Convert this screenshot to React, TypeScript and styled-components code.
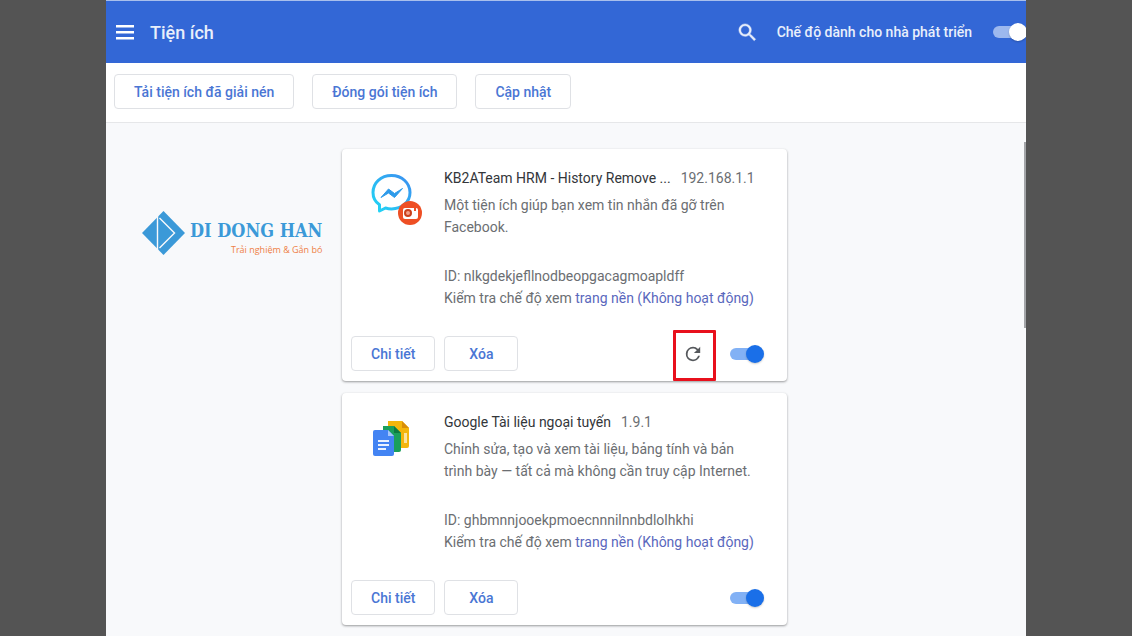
import React, { useState } from "react";
import styled, { createGlobalStyle } from "styled-components";

const GlobalStyle = createGlobalStyle`
  *, *::before, *::after { box-sizing: border-box; }
  body {
    margin: 0;
    background: #545454;
    font-family: Roboto, "Liberation Sans", sans-serif;
    font-size: 14px;
    color: #6b6e72;
  }
`;

const Page = styled.div`
  position: relative;
  min-height: 100vh;
  margin: 0 106px;
  display: flex;
  flex-direction: column;
  background: #f8f9fb;
  overflow: hidden;
`;

const TopBar = styled.header`
  height: 63px;
  display: flex;
  align-items: center;
  padding-left: 10px;
  border-top: 1px solid #a9bfec;
  background: #3367d6;
  color: #e9effb;
`;

const IconButton = styled.button<{ $color: string }>`
  display: flex;
  padding: 0;
  border: 0;
  background: none;
  color: ${(p) => p.$color};
  cursor: pointer;
`;

const PageTitle = styled.h1`
  flex: 1;
  margin: 0 0 0 16px;
  font-size: 18px;
  font-weight: 500;
`;

const DevMode = styled.label`
  display: flex;
  align-items: center;
  gap: 21px;
  margin-left: 18px;
  margin-right: -1px;
  font-size: 14px;
  font-weight: 500;
`;

const Switch = styled.input<{ $knob: string; $track: string }>`
  appearance: none;
  position: relative;
  width: 34px;
  height: 18px;
  margin: 0;
  cursor: pointer;

  &::before {
    content: "";
    position: absolute;
    inset: 3px 1px 3px 0;
    border-radius: 7px;
    background: ${(p) => p.$track};
  }
  &::after {
    content: "";
    position: absolute;
    top: 0;
    left: 0;
    width: 18px;
    height: 18px;
    border-radius: 50%;
    background: ${(p) => p.$knob};
    box-shadow: 0 1px 2px rgba(0, 0, 0, 0.2);
  }
  &:checked::after {
    left: auto;
    right: 0;
  }
`;

const Toolbar = styled.div`
  display: flex;
  gap: 18px;
  padding: 11px 8px 13px;
  border-bottom: 1px solid #e6e7e9;
  background: #fff;
`;

const OutlineButton = styled.button`
  height: 35px;
  min-width: 74px;
  padding: 0 19px;
  border: 1px solid #dfe1e5;
  border-radius: 4px;
  background: #fff;
  color: #4a76d4;
  font: 500 14px Roboto, "Liberation Sans", sans-serif;
  cursor: pointer;
`;

const Content = styled.main`
  flex: 1;
  display: grid;
  grid-template-columns: 1fr 445px 1fr;
  padding: 26px 3px 10px 0;
`;

const Brand = styled.div`
  display: flex;
  align-items: flex-start;
  gap: 5px;
  padding: 62px 0 0 36px;
`;

const BrandText = styled.div`
  display: flex;
  flex-direction: column;
  align-items: flex-end;
  padding-top: 8px;
  white-space: nowrap;
`;

const BrandName = styled.div`
  font: 700 18px/24px "DejaVu Serif Condensed", "Liberation Serif", serif;
  color: #3b99d8;
`;

const BrandTagline = styled.div`
  font: 400 9px/14px "Open Sans", sans-serif;
  color: #ef7f45;
`;

const CardList = styled.div`
  display: flex;
  flex-direction: column;
  gap: 12px;
`;

const Card = styled.article`
  height: 232px;
  display: flex;
  flex-direction: column;
  border-radius: 4px;
  background: #fff;
  box-shadow: 0 1px 2px rgba(60, 64, 67, 0.35), 0 1px 3px rgba(60, 64, 67, 0.2);
`;

const CardBody = styled.div`
  flex: 1;
  display: grid;
  grid-template-columns: 54px 1fr;
  column-gap: 20px;
  padding: 18px 24px 0 28px;
  line-height: 22px;
`;

const IconSlot = styled.div`
  padding-top: 5px;
`;

const Heading = styled.div`
  display: flex;
  gap: 10px;
  margin-bottom: 5px;
`;

const Name = styled.h2`
  margin: 0;
  font-size: 14px;
  font-weight: 400;
  color: #33363a;
  white-space: nowrap;
`;

const Description = styled.p`
  min-height: 44px;
  margin: 0 0 27px;
`;

const Detail = styled.div`
  white-space: nowrap;
`;

const ViewLink = styled.a`
  color: #5a68bd;
  text-decoration: none;
`;

const CardFooter = styled.div`
  display: flex;
  align-items: center;
  gap: 9px;
  padding: 0 23px 10px 9px;
`;

const Controls = styled.div`
  display: flex;
  align-items: center;
  gap: 28px;
  margin-left: auto;
`;

const Highlighted = styled.div`
  position: relative;

  &::after {
    content: "";
    position: absolute;
    inset: -15px -14px -18px -11px;
    border: 3px solid #e8101c;
    border-radius: 1px;
    pointer-events: none;
  }
`;

const ScrollThumb = styled.div`
  position: absolute;
  top: 142px;
  right: 0;
  width: 2px;
  height: 186px;
  background: #a3a5a8;
`;

const MenuIcon = () => (
  <svg width="18" height="16" viewBox="0 0 18 16" fill="currentColor" aria-hidden="true">
    <path d="M0 1h18v2.500H0zM0 7h18v2.500H0zM0 13h18v2.500H0z" />
  </svg>
);

const SearchIcon = () => (
  <svg width="23" height="23" viewBox="0 0 24 24" fill="currentColor" stroke="currentColor" strokeWidth="0.500" aria-hidden="true">
    <path d="M15.500 14h-.79l-.28-.27A6.470 6.470 0 0 0 16 9.500 6.500 6.500 0 1 0 9.500 16c1.610 0 3.090-.59 4.230-1.570l.27.28v.79l5 4.990L20.490 19zm-6 0a4.500 4.500 0 1 1 0-9 4.500 4.500 0 0 1 0 9z" />
  </svg>
);

const ReloadIcon = () => (
  <svg width="18" height="18" viewBox="2 2 20 20" fill="currentColor" aria-hidden="true">
    <path d="M17.650 6.350A7.960 7.960 0 0 0 12 4a8 8 0 1 0 7.730 10h-2.080A6 6 0 1 1 12 6c1.660 0 3.140.69 4.220 1.780L13 11h7V4z" />
  </svg>
);

const BrandMark = () => (
  <svg width="43" height="44" viewBox="0 0 43 44" aria-hidden="true">
    <path d="M21.500 0 43 22 21.500 44 0 22z" fill="#3b99d8" />
    <path d="M15.500 5v34M17.500 7l15 15-15 15" fill="none" stroke="#f8f9fb" strokeWidth="1.400" />
  </svg>
);

const MessengerIcon = () => (
  <svg width="54" height="54" viewBox="0 0 54 54" aria-hidden="true">
    <defs>
      <linearGradient id="bubble" x1="0" y1="1" x2="1" y2="0">
        <stop offset="0" stopColor="#20d8f5" />
        <stop offset="1" stopColor="#3b8ef0" />
      </linearGradient>
    </defs>
    <path
      d="M21.500 3.500C11 3.500 3 10.800 3 20.500c0 5.500 2.400 9.500 6.500 12.300V39l6-3c2 .600 4 .900 6 .900 10.500 0 18.500-7 18.500-16.400S32 3.500 21.500 3.500z"
      fill="#fff"
      stroke="url(#bubble)"
      strokeWidth="3"
      strokeLinejoin="round"
    />
    <path d="M11 25.500 18.500 17l6 4.500 8-5-8 9-6-4.500z" fill="#2e9bea" stroke="#2e9bea" strokeWidth="1" />
    <circle cx="40" cy="41" r="12" fill="#ee4f24" />
    <rect x="33" y="36" width="15" height="11" rx="2" fill="#fff" />
    <circle cx="38" cy="41" r="3" fill="#f3a08a" stroke="#c9401c" strokeWidth="2" />
    <path d="M44 36h2v3h-2z" fill="#ee4f24" />
  </svg>
);

const DocsIcon = () => (
  <svg width="42" height="44" viewBox="0 0 42 44" aria-hidden="true">
    <path d="M18 5h14l7 7v18a2 2 0 0 1-2 2H18z" fill="#f4b60c" />
    <path d="M32 5l7 7h-7z" fill="#d98e08" />
    <path d="M34 17h3v10h-3z" fill="#fbe3a0" />
    <path d="M13 10h11l7 7v17a2 2 0 0 1-2 2H13z" fill="#1a9f5c" />
    <path d="M24 10l7 7h-7z" fill="#0d7a43" />
    <path d="M5 14h13l6 6v18a2 2 0 0 1-2 2H5a2 2 0 0 1-2-2V16a2 2 0 0 1 2-2z" fill="#4384f3" />
    <path d="M18 14l6 6h-6z" fill="#a5c6fb" />
    <path d="M8 24h11v2H8zM8 28h11v2H8zM8 32h8v2H8z" fill="#eaf2ff" />
  </svg>
);

interface Extension {
  name: string;
  version: string;
  description: string;
  id: string;
  icon: React.ReactNode;
  reloadable: boolean;
}

const extensions: Extension[] = [
  {
    name: "KB2ATeam HRM - History Remove ...",
    version: "192.168.1.1",
    description: "Một tiện ích giúp bạn xem tin nhắn đã gỡ trên Facebook.",
    id: "nlkgdekjefllnodbeopgacagmoapldff",
    icon: <MessengerIcon />,
    reloadable: true,
  },
  {
    name: "Google Tài liệu ngoại tuyến",
    version: "1.9.1",
    description: "Chỉnh sửa, tạo và xem tài liệu, bảng tính và bản trình bày — tất cả mà không cần truy cập Internet.",
    id: "ghbmnnjooekpmoecnnnilnnbdlolhkhi",
    icon: <DocsIcon />,
    reloadable: false,
  },
];

function ExtensionCard({ item }: { item: Extension }) {
  const [enabled, setEnabled] = useState(true);
  return (
    <Card>
      <CardBody>
        <IconSlot>{item.icon}</IconSlot>
        <div>
          <Heading>
            <Name>{item.name}</Name>
            <span>{item.version}</span>
          </Heading>
          <Description>{item.description}</Description>
          <Detail>ID: {item.id}</Detail>
          <Detail>
            Kiểm tra chế độ xem <ViewLink href="#">trang nền (Không hoạt động)</ViewLink>
          </Detail>
        </div>
      </CardBody>
      <CardFooter>
        <OutlineButton>Chi tiết</OutlineButton>
        <OutlineButton>Xóa</OutlineButton>
        <Controls>
          {item.reloadable && (
            <Highlighted>
              <IconButton $color="#55585c" aria-label="Tải lại">
                <ReloadIcon />
              </IconButton>
            </Highlighted>
          )}
          <Switch
            type="checkbox"
            $knob="#1a6fe8"
            $track="#82b1f5"
            aria-label={item.name}
            checked={enabled}
            onChange={(e) => setEnabled(e.target.checked)}
          />
        </Controls>
      </CardFooter>
    </Card>
  );
}

export default function App() {
  const [devMode, setDevMode] = useState(true);
  return (
    <>
      <GlobalStyle />
      <Page>
        <TopBar>
          <IconButton $color="#fff" aria-label="Menu">
            <MenuIcon />
          </IconButton>
          <PageTitle>Tiện ích</PageTitle>
          <IconButton $color="#e9effb" aria-label="Tìm kiếm">
            <SearchIcon />
          </IconButton>
          <DevMode>
            Chế độ dành cho nhà phát triển
            <Switch
              type="checkbox"
              $knob="#fff"
              $track="#9db8ee"
              checked={devMode}
              onChange={(e) => setDevMode(e.target.checked)}
            />
          </DevMode>
        </TopBar>
        <Toolbar>
          <OutlineButton>Tải tiện ích đã giải nén</OutlineButton>
          <OutlineButton>Đóng gói tiện ích</OutlineButton>
          <OutlineButton>Cập nhật</OutlineButton>
        </Toolbar>
        <Content>
          <Brand>
            <BrandMark />
            <BrandText>
              <BrandName>DI DONG HAN</BrandName>
              <BrandTagline>Trải nghiệm &amp; Gắn bó</BrandTagline>
            </BrandText>
          </Brand>
          <CardList>
            {extensions.map((item) => (
              <ExtensionCard key={item.id} item={item} />
            ))}
          </CardList>
        </Content>
        <ScrollThumb />
      </Page>
    </>
  );
}
